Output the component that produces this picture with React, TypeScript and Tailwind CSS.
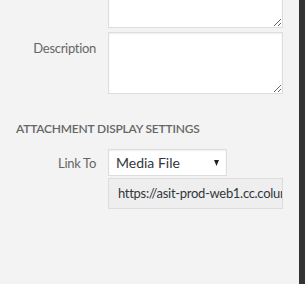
const App = () => {
  return (
    <div className="flex h-[284px] w-[305px] overflow-hidden bg-[#f3f3f3] font-['Lato',sans-serif]">
      <div className="flex-1 flex flex-col">
        {/* cut-off field above */}
        <div className="flex h-[28px] overflow-hidden">
          <div className="w-[108px] shrink-0" />
          <textarea
            readOnly
            className="mt-[-34px] h-[62px] w-[175px] resize-y border border-[#dddddd] bg-white shadow-[inset_0_1px_2px_rgba(0,0,0,0.07)] outline-none"
          />
        </div>

        <div className="mt-[4px] flex">
          <label className="w-[96px] shrink-0 pt-[6px] text-right text-[13px] leading-[20px] tracking-[-0.3px] text-[#666666]">
            Description
          </label>
          <textarea
            readOnly
            className="ml-[12px] h-[62px] w-[175px] resize-y border border-[#dddddd] bg-white shadow-[inset_0_1px_2px_rgba(0,0,0,0.07)] outline-none"
          />
        </div>

        <h2 className="mt-[25px] pl-[16px] text-[12px] font-semibold uppercase leading-[20px] tracking-[-0.2px] text-[#666666]">
          Attachment Display Settings
        </h2>

        <div className="mt-[10px] flex items-center">
          <label className="w-[96px] shrink-0 text-right text-[13px] leading-[20px] tracking-[-0.3px] text-[#666666]">
            Link To
          </label>
          <div className="ml-[12px] flex h-[27px] w-[119px] items-center justify-between border border-[#dddddd] bg-white pl-[7px] pr-[7px] shadow-[inset_0_1px_2px_rgba(0,0,0,0.07)]">
            <span className="text-[14px] text-[#32373c]">Media File</span>
            <svg width="5" height="6" viewBox="0 0 5 6">
              <path d="M0 0h5L2.5 6z" fill="#222" />
            </svg>
          </div>
        </div>

        <div className="mt-[2px] flex">
          <div className="w-[108px] shrink-0" />
          <div className="flex h-[31px] w-[175px] items-center overflow-hidden whitespace-nowrap border border-[#dddddd] bg-[#eeeeee] pl-[9px] text-[13px] tracking-[-0.3px] text-[#32373c]">
            https://asit-prod-web1.cc.columbia.edu
          </div>
        </div>
      </div>
      <div className="w-[6px] shrink-0 bg-[#333333]" />
    </div>
  );
};

export default App;
